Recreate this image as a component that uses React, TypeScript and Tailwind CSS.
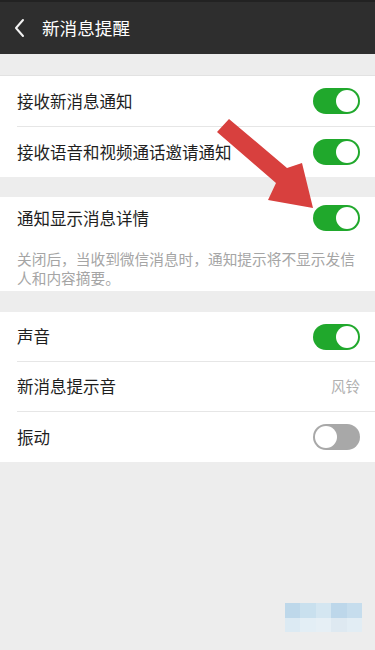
import React from "react";

const font = { fontFamily: '"Noto Sans CJK SC", "Noto Sans", sans-serif' };

function Toggle({ on }: { on: boolean }) {
  return (
    <div
      className={`relative w-[47px] h-[26px] rounded-full shrink-0 ${on ? "bg-[#20a82c]" : "bg-[#a8a8a8]"}`}
    >
      <div
        className={`absolute top-[2px] w-[22px] h-[22px] rounded-full bg-white ${on ? "right-[2px]" : "left-[2px]"}`}
      />
    </div>
  );
}

function Row({
  label,
  right,
  divider,
  h = "h-[50px]",
}: {
  label: string;
  right: React.ReactNode;
  divider?: boolean;
  h?: string;
}) {
  return (
    <div className="pl-[17px]">
      <div
        className={`flex items-center justify-between pr-[15px] ${h} ${divider ? "border-b border-[#e6e6e6]" : ""}`}
      >
        <span className="text-[16.5px] text-[#1e1e1e] leading-none">{label}</span>
        {right}
      </div>
    </div>
  );
}

export default function App() {
  const blues = ["#b9d6ea", "#c6dfef", "#d2e6f2", "#b8d5ea", "#c2dcee"];
  const blues2 = ["#dbeaf4", "#e3eff6", "#e6f0f6", "#dde9f2", "#e1edf5"];
  return (
    <div className="relative w-[375px] h-[650px] bg-[#ededed] overflow-hidden" style={font}>
      <div className="h-[54px] bg-[#2e2e2e] border-t-[2px] border-[#222] flex items-center">
        <svg width="40" height="24" viewBox="0 0 40 24" className="ml-0">
          <path d="M23 4 L16 12 L23 20" stroke="#f2f2f2" strokeWidth="2" fill="none" strokeLinecap="round" strokeLinejoin="round" />
        </svg>
        <span className="ml-[2px] text-[17.6px] text-white leading-none">新消息提醒</span>
      </div>

      <div className="h-[22px] border-b border-[#e2e2e2] box-content" style={{ height: 21 }} />

      <div className="bg-white">
        <Row label="接收新消息通知" right={<Toggle on />} divider h="h-[51px]" />
        <Row label="接收语音和视频通话邀请通知" right={<Toggle on />} />
      </div>

      <div className="h-[20px]" />

      <div className="bg-white pb-[4px]">
        <Row label="通知显示消息详情" right={<Toggle on />} h="h-[42px]" />
        <div className="pl-[17px] pr-[15px] pt-[10px] text-[14.7px] leading-[19px] text-[#a5a5a5]">
          关闭后，当收到微信消息时，通知提示将不显示发信人和内容摘要。
        </div>
      </div>

      <div className="h-[21px]" />

      <div className="bg-white">
        <Row label="声音" right={<Toggle on />} divider />
        <Row
          label="新消息提示音"
          right={<span className="text-[14.5px] text-[#b0b0b0] leading-none">风铃</span>}
          divider
        />
        <Row label="振动" right={<Toggle on={false} />} />
      </div>

      <svg className="absolute left-0 top-0 pointer-events-none" width="375" height="650">
        <polygon
          points="229,119 217,132 276,183 268,200 313,208 302,163 287,168"
          fill="#d8403e"
        />
      </svg>

      <div className="absolute left-[285px] top-[603px] w-[77px] flex flex-col opacity-90">
        <div className="flex">
          {blues.map((c, i) => (
            <div key={i} className="w-[15.4px] h-[15px]" style={{ background: c }} />
          ))}
        </div>
        <div className="flex">
          {blues2.map((c, i) => (
            <div key={i} className="w-[15.4px] h-[14px]" style={{ background: c }} />
          ))}
        </div>
      </div>
    </div>
  );
}
